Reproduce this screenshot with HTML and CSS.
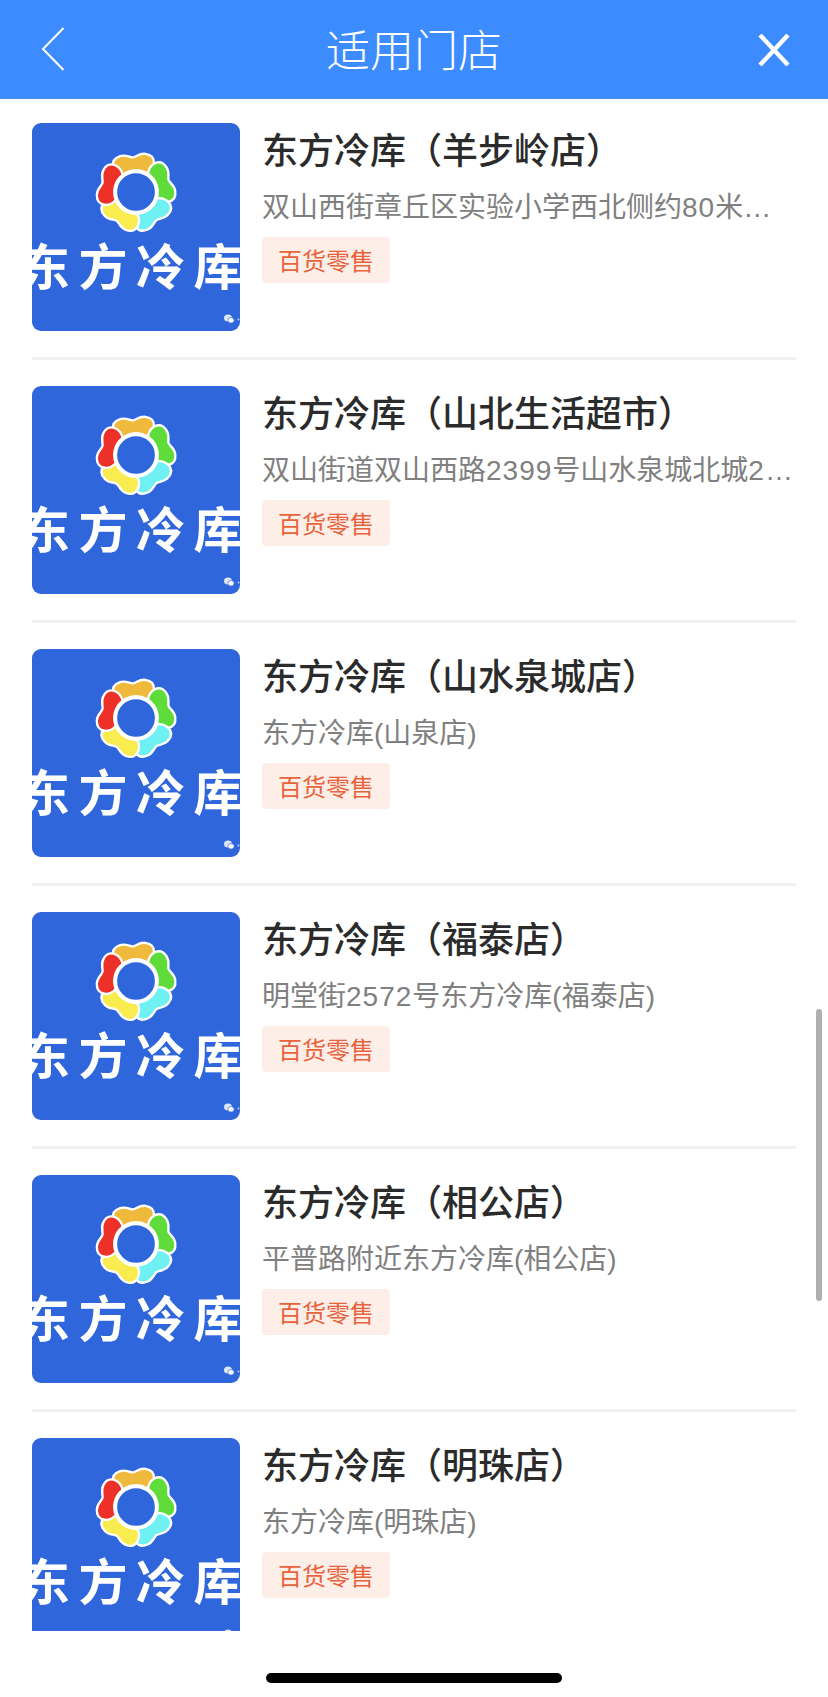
FILE: index.html
```html
<!DOCTYPE html>
<html lang="zh-CN">

<head>
  <meta charset="UTF-8" />
  <meta name="viewport" content="width=device-width, initial-scale=1.0" />
  <title>适用门店</title>
  <link rel="stylesheet" href="styles.css">
</head>

<body>
  <svg class="defs" aria-hidden="true">
    <symbol id="flower" viewBox="-45 -45 90 90">
      <path d="M-13-18C-21-20-26-35-13-38-7-39.500-3-35.500 0-35.500 3-35.500 7-39.500 13-38 26-35 21-20 13-18A22 22 0 0 0-13-18Z" fill="#efb93c" stroke="#fff" stroke-width="2.400" transform="rotate(-5)" />
      <path d="M-13-18C-21-20-26-35-13-38-7-39.500-3-35.500 0-35.500 3-35.500 7-39.500 13-38 26-35 21-20 13-18A22 22 0 0 0-13-18Z" fill="#5fdc3a" stroke="#fff" stroke-width="2.400" transform="rotate(70)" />
      <path d="M-13-18C-21-20-26-35-13-38-7-39.500-3-35.500 0-35.500 3-35.500 7-39.500 13-38 26-35 21-20 13-18A22 22 0 0 0-13-18Z" fill="#6ff0f2" stroke="#fff" stroke-width="2.400" transform="rotate(144)" />
      <path d="M-13-18C-21-20-26-35-13-38-7-39.500-3-35.500 0-35.500 3-35.500 7-39.500 13-38 26-35 21-20 13-18A22 22 0 0 0-13-18Z" fill="#f8ec4e" stroke="#fff" stroke-width="2.400" transform="rotate(214)" />
      <path d="M-13-18C-21-20-26-35-13-38-7-39.500-3-35.500 0-35.500 3-35.500 7-39.500 13-38 26-35 21-20 13-18A22 22 0 0 0-13-18Z" fill="#ee3128" stroke="#fff" stroke-width="2.400" transform="rotate(285)" />
      <circle r="20.500" fill="#2f66dc" stroke="#fff" stroke-width="2.400" />
    </symbol>
    <symbol id="wechat" viewBox="0 0 16 10">
      <ellipse cx="4" cy="4" rx="4" ry="3.500" fill="#dfe6f4" />
      <ellipse cx="7" cy="6.300" rx="3.200" ry="2.800" fill="#fff" stroke="#2f66dc" stroke-width=".7" />
      <circle cx="14.500" cy="5.500" r="1" fill="#c3d2f0" />
    </symbol>
  </svg>

  <div class="page">
    <header class="nav">
      <button class="nav-btn">
        <svg class="icon-back" viewBox="0 0 24 44">
          <path d="M22.500 1 2 22l20.500 21" fill="none" stroke="#fff" stroke-width="2" />
        </svg>
      </button>
      <h1>适用门店</h1>
      <button class="nav-btn">
        <svg class="icon-close" viewBox="0 0 32 32">
          <path d="M2 1l28 30M30 1 2 31" fill="none" stroke="#fff" stroke-width="4.400" />
        </svg>
      </button>
    </header>

    <main class="list">
      <div class="store">
        <div class="logo">
          <svg class="flower"><use href="#flower" /></svg>
          <span class="logo-name">东方冷库</span>
          <svg class="wechat"><use href="#wechat" /></svg>
        </div>
        <div class="info">
          <h2>东方冷库（羊步岭店）</h2>
          <p>双山西街章丘区实验小学西北侧约<span class="num">80</span>米路东</p>
          <span class="tag">百货零售</span>
        </div>
      </div>
      <div class="store">
        <div class="logo">
          <svg class="flower"><use href="#flower" /></svg>
          <span class="logo-name">东方冷库</span>
          <svg class="wechat"><use href="#wechat" /></svg>
        </div>
        <div class="info">
          <h2>东方冷库（山北生活超市）</h2>
          <p>双山街道双山西路<span class="num">2399</span>号山水泉城北城<span class="num">2</span>期南门</p>
          <span class="tag">百货零售</span>
        </div>
      </div>
      <div class="store">
        <div class="logo">
          <svg class="flower"><use href="#flower" /></svg>
          <span class="logo-name">东方冷库</span>
          <svg class="wechat"><use href="#wechat" /></svg>
        </div>
        <div class="info">
          <h2>东方冷库（山水泉城店）</h2>
          <p>东方冷库(山泉店)</p>
          <span class="tag">百货零售</span>
        </div>
      </div>
      <div class="store">
        <div class="logo">
          <svg class="flower"><use href="#flower" /></svg>
          <span class="logo-name">东方冷库</span>
          <svg class="wechat"><use href="#wechat" /></svg>
        </div>
        <div class="info">
          <h2>东方冷库（福泰店）</h2>
          <p>明堂街<span class="num">2572</span>号东方冷库(福泰店)</p>
          <span class="tag">百货零售</span>
        </div>
      </div>
      <div class="store">
        <div class="logo">
          <svg class="flower"><use href="#flower" /></svg>
          <span class="logo-name">东方冷库</span>
          <svg class="wechat"><use href="#wechat" /></svg>
        </div>
        <div class="info">
          <h2>东方冷库（相公店）</h2>
          <p>平普路附近东方冷库(相公店)</p>
          <span class="tag">百货零售</span>
        </div>
      </div>
      <div class="store">
        <div class="logo">
          <svg class="flower"><use href="#flower" /></svg>
          <span class="logo-name">东方冷库</span>
          <svg class="wechat"><use href="#wechat" /></svg>
        </div>
        <div class="info">
          <h2>东方冷库（明珠店）</h2>
          <p>东方冷库(明珠店)</p>
          <span class="tag">百货零售</span>
        </div>
      </div>
      <div class="scrollbar"></div>
    </main>

    <footer class="home">
      <div class="home-bar"></div>
    </footer>
  </div>
</body>

</html>
```

FILE: styles.css
```css
* {
  box-sizing: border-box;
}

html,
body {
  margin: 0;
  padding: 0;
  background: #fff;
}

body {
  font-family: "Noto Sans CJK SC", "Liberation Sans", sans-serif;
}

.defs {
  display: block;
  width: 0;
  height: 0;
}

.page {
  width: 828px;
  height: 1697px;
  display: flex;
  flex-direction: column;
  overflow: hidden;
}

.nav {
  height: 99px;
  flex: none;
  padding: 0 38px 0 41px;
  background: #3c8cff;
  border-bottom: 1px solid #4a8fe8;
  display: flex;
  align-items: center;
  justify-content: space-between;
}

.nav h1 {
  margin: -2px 3px 0 0;
  color: #fff;
  font-size: 44px;
  font-weight: 300;
  line-height: 98px;
}

.nav-btn {
  width: 32px;
  padding: 0;
  border: none;
  background: none;
  display: flex;
  align-items: center;
}

.icon-back {
  width: 24px;
  height: 44px;
  display: block;
}

.icon-close {
  width: 32px;
  height: 32px;
  margin-top: 2px;
  display: block;
}

.list {
  height: 1532px;
  flex: none;
  position: relative;
  overflow: hidden;
  padding: 0 32px 0;
}

.store {
  padding: 26px 0;
  border-bottom: 3px solid #f1f1f1;
  display: flex;
  gap: 22px;
}

.store:first-child {
  padding-top: 24px;
}

.store:last-of-type {
  border-bottom: none;
}

.logo {
  width: 208px;
  height: 208px;
  flex: none;
  position: relative;
  overflow: hidden;
  border-radius: 9px;
  background: #2f66dc;
  display: flex;
  flex-direction: column;
  align-items: center;
}

.flower {
  width: 88px;
  height: 88px;
  flex: none;
  margin-top: 25px;
}

.logo-name {
  flex: none;
  margin-top: 1px;
  color: #fff;
  font-size: 49px;
  font-weight: 700;
  line-height: 54px;
  letter-spacing: 8.500px;
  white-space: nowrap;
}

.wechat {
  position: absolute;
  left: 192px;
  top: 191px;
  width: 16px;
  height: 10px;
}

.info {
  flex: 1;
  min-width: 0;
}

.info h2 {
  margin: 0;
  color: #2b2b2b;
  font-size: 36px;
  font-weight: 500;
  line-height: 50px;
  white-space: nowrap;
}

.info p {
  margin: 15px 0 0;
  color: #808080;
  font-family: "Liberation Sans", "Noto Sans CJK SC", sans-serif;
  font-size: 28px;
  line-height: 40px;
  white-space: nowrap;
  overflow: hidden;
  text-overflow: ellipsis;
}

.num {
  letter-spacing: 1px;
}

.tag {
  display: block;
  width: 128px;
  height: 46px;
  margin-top: 9px;
  border-radius: 4px;
  background: #fdeee8;
  color: #e8633c;
  font-size: 24px;
  line-height: 46px;
  text-align: center;
}

.scrollbar {
  position: absolute;
  top: 910px;
  right: 6px;
  width: 6px;
  height: 292px;
  border-radius: 3px;
  background: #b0b0b0;
}

.home {
  flex: 1;
  display: flex;
  justify-content: center;
  padding-top: 42px;
}

.home-bar {
  width: 296px;
  height: 10px;
  border-radius: 5px;
  background: #000;
}
```
